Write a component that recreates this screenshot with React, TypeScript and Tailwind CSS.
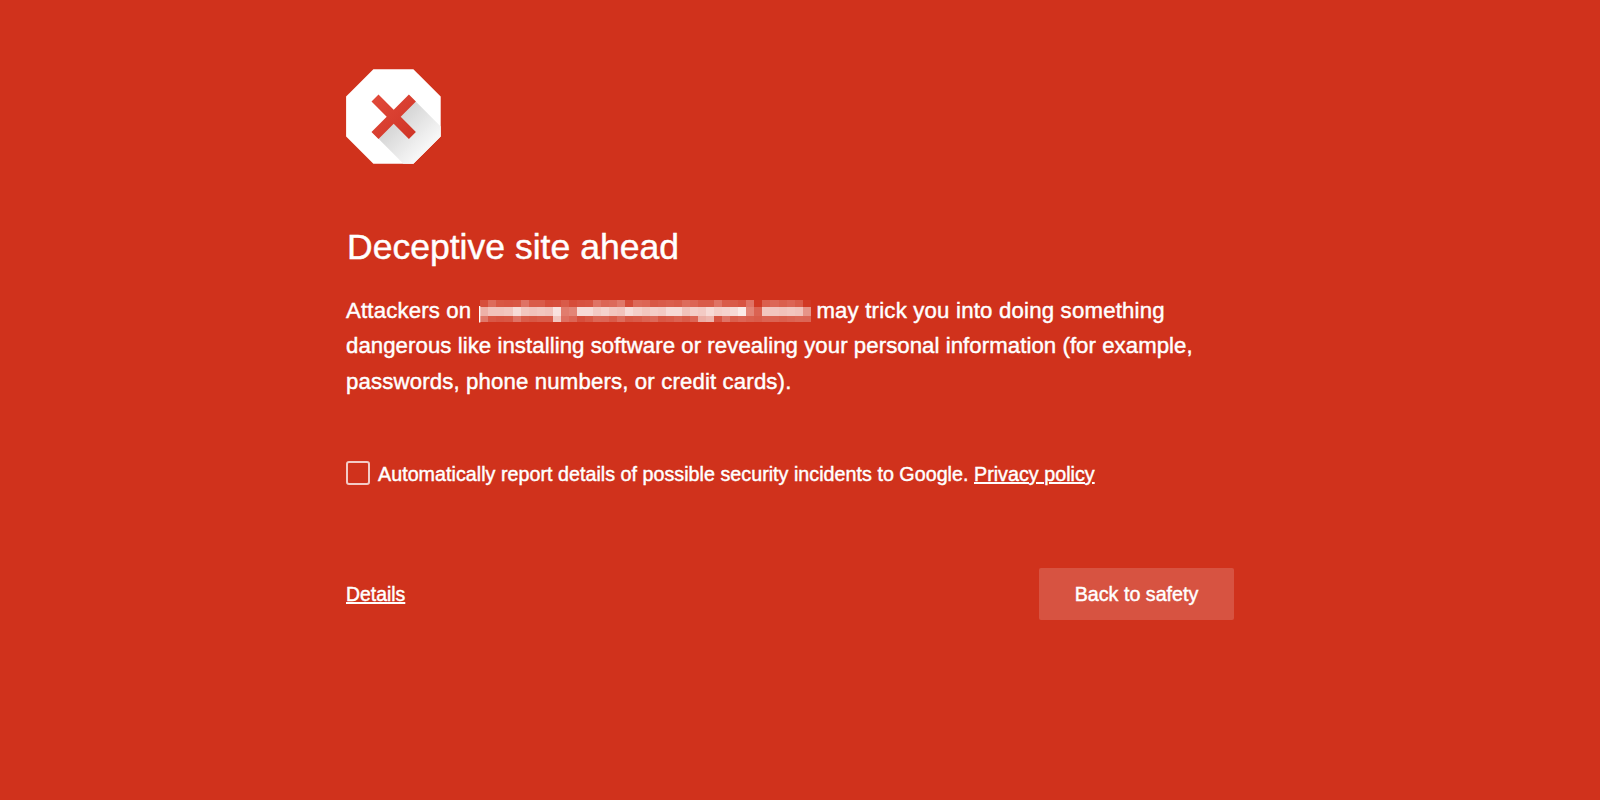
// Opacity of each mosaic cell over the redacted host name, one row per band
const mosaic = [
  { y: 0, h: 7.3, cells: [0.14, 0.28, 0.18, 0.17, 0.18, 0.32, 0.2, 0.2, 0.13, 0.14, 0.2, 0.13, 0.16, 0.17, 0.32, 0.25, 0.27, 0.34, 0.12, 0.27, 0.25, 0.18, 0.2, 0.22, 0.2, 0.28, 0.25, 0.2, 0.2, 0.32, 0.2, 0.2, 0.17, 0.32, 0.03, 0.22, 0.26, 0.22, 0.25, 0.2, 0.03] },
  { y: 7.3, h: 8.3, cells: [0.62, 0.7, 0.7, 0.72, 0.83, 0.72, 0.7, 0.72, 0.7, 0.86, 0.36, 0.4, 0.82, 0.82, 0.74, 0.78, 0.72, 0.7, 0.82, 0.76, 0.72, 0.76, 0.74, 0.82, 0.82, 0.7, 0.76, 0.74, 0.82, 0.76, 0.78, 0.82, 0.9, 0.4, 0.24, 0.72, 0.72, 0.7, 0.72, 0.7, 0.48] },
  { y: 15.6, h: 6.8, cells: [0.34, 0.19, 0.17, 0.18, 0.32, 0.2, 0.18, 0.2, 0.2, 0.72, 0.3, 0.25, 0.14, 0.18, 0.26, 0.25, 0.2, 0.28, 0.18, 0.2, 0.24, 0.27, 0.18, 0.2, 0.24, 0.2, 0.25, 0.6, 0.64, 0.16, 0.32, 0.22, 0.25, 0.22, 0.2, 0.24, 0.24, 0.22, 0.24, 0.26, 0.25] },
];

function StopIcon() {
  return (
    <svg className="block h-[95px] w-[95px]" viewBox="0 0 95 95">
      <defs>
        <linearGradient id="shadow" gradientUnits="userSpaceOnUse" x1="46" y1="46" x2="79" y2="79">
          <stop offset="0" stopColor="#d0d0d0" />
          <stop offset="1" stopColor="#f6f6f6" />
        </linearGradient>
        <linearGradient id="cross" x1="0" y1="0" x2="1" y2="1">
          <stop offset="0" stopColor="#e24a3a" />
          <stop offset="1" stopColor="#cf3426" />
        </linearGradient>
      </defs>
      <path d="M27.4 .3H67.4L94.7 27.6V67.4L67.4 94.7H27.4L.1 67.4V27.6Z" fill="#fff" />
      <path d="M69.5 32.3L94.7 57.5V67.4L67.4 94.7H57.4L26 63.3Z" fill="url(#shadow)" />
      <path
        d="M25.5 32.5L32.5 25.5L47.7 40.7L62.9 25.5L69.9 32.5L54.7 47.7L69.9 62.9L62.9 69.9L47.7 54.7L32.5 69.9L25.5 62.9L40.7 47.7Z"
        fill="url(#cross)"
      />
    </svg>
  );
}

function HiddenHost() {
  return (
    <svg className="ml-2 mr-[5px] inline-block h-[24px] w-[332px] align-[-6px]" viewBox="0 0 332 24">
      <rect x="0" y="6" width="1.3" height="16.5" fill="#fff" />
      <g shapeRendering="crispEdges">
        {mosaic.map((row) =>
          row.cells.map((opacity, i) => (
            <rect
              key={`${row.y}-${i}`}
              x={1.3 + i * 8.06}
              y={row.y}
              width={8.06}
              height={row.h}
              fill="#fff"
              fillOpacity={opacity}
            />
          ))
        )}
      </g>
    </svg>
  );
}

export default function App() {
  return (
    <div className="h-[800px] w-full bg-[#d0321c] pt-[69px] font-['Liberation_Sans',Arial,sans-serif] text-white [-webkit-text-stroke:0.45px_white]">
      <main className="ml-[346px] w-[888px] whitespace-nowrap">
        <StopIcon />

        <h1 className="ml-px mt-[63px] text-[35.5px] leading-[40px] tracking-[0.02px]">Deceptive site ahead</h1>

        {/* Warning message */}
        <div className="mt-[25.5px] text-[22.2px] leading-[35.5px]">
          <p className="h-[35.5px]">
            <span className="tracking-[0.17px]">Attackers on</span>
            <HiddenHost />
            <span className="tracking-[0.2px]">may trick you into doing something</span>
          </p>
          <p className="tracking-[0.065px]">
            dangerous like installing software or revealing your personal information (for example,
          </p>
          <p className="tracking-[0.15px]">passwords, phone numbers, or credit cards).</p>
        </div>

        {/* Opt-in */}
        <div className="mt-[62px] flex h-6 items-center text-[19.7px] leading-6">
          <span className="h-6 w-6 rounded-[3px] border-2 border-white/75" />
          <span className="ml-2 pt-[2px] tracking-[0.025px]">
            Automatically report details of possible security incidents to Google.{" "}
            <a className="underline decoration-[1.5px] underline-offset-[1px]" href="#">Privacy policy</a>
          </span>
        </div>

        {/* Actions */}
        <div className="mt-[83px] flex items-center justify-between">
          <a className="pt-px text-[19.4px] underline decoration-[1.5px] underline-offset-[1px]" href="#">Details</a>
          <button className="h-[52px] w-[195px] rounded-[2px] bg-[#d75341] pt-px text-[19.7px]">Back to safety</button>
        </div>
      </main>
    </div>
  );
}
